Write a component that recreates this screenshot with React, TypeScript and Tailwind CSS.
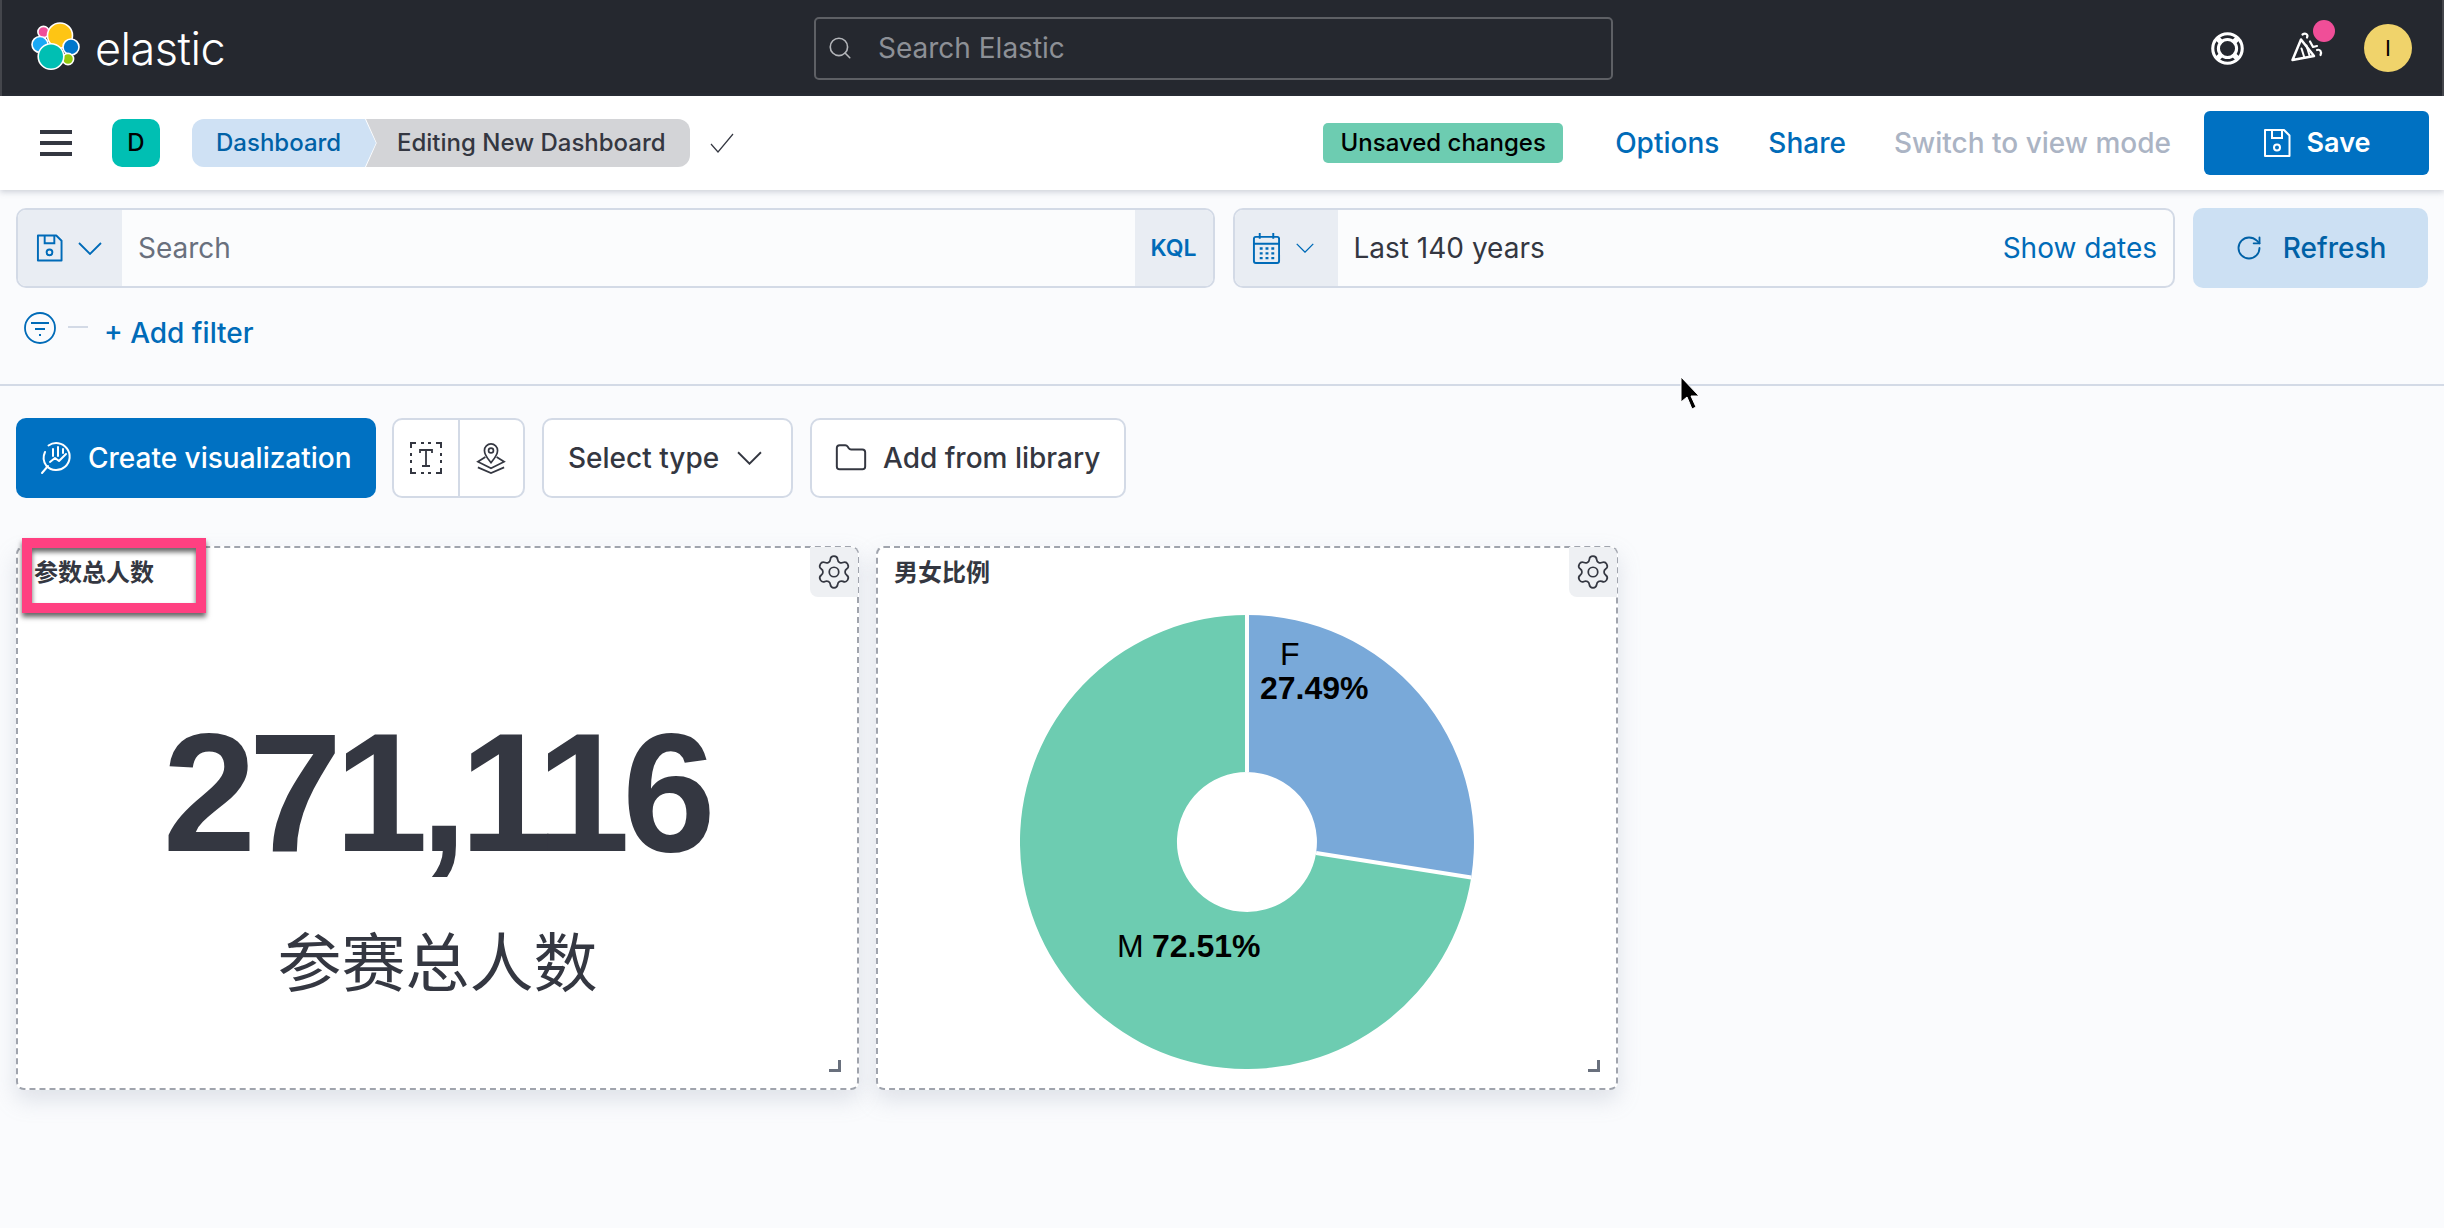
import React from 'react';
import { Search, Settings, RotateCw, Folder } from 'lucide-react';

const ElasticLogo = () => (
  <svg width="52" height="52" viewBox="0 0 52 52" className="shrink-0">
    <g stroke="#ffffff" strokeWidth="1.6">
      <circle cx="13.5" cy="10" r="5.6" fill="#f04e98" />
      <circle cx="10" cy="22.5" r="8" fill="#1ba9f5" />
      <circle cx="30" cy="13.5" r="12.5" fill="#fec514" />
      <circle cx="41" cy="25" r="8" fill="#0077cc" />
      <circle cx="38" cy="37" r="5.6" fill="#93c90e" />
      <circle cx="21" cy="34.5" r="12.8" fill="#00bfb3" />
    </g>
  </svg>
);

const DiskIcon = ({ className }: { className: string }) => (
  <svg viewBox="0 0 28 29" className={className} fill="none" stroke="currentColor" strokeWidth="2">
    <path d="M2 1.500h19l5.500 5.500v20.500H2z" strokeLinejoin="round" />
    <path d="M9 1.500v8h10v-8" />
    <circle cx="14" cy="19" r="3" />
  </svg>
);

const Chevron = ({ className }: { className: string }) => (
  <svg viewBox="0 0 24 13" className={className} fill="none" stroke="currentColor" strokeWidth="1.8">
    <path d="M1 1l11 11L23 1" />
  </svg>
);

const Tick = () => (
  <svg viewBox="0 0 24 20" className="w-[24px] h-[20px] ml-[20px] text-[#343741]" fill="none" stroke="currentColor" strokeWidth="1.2">
    <path d="M1 11l7 8L23 1" />
  </svg>
);

const CalendarIcon = () => (
  <svg viewBox="0 0 30 34" className="w-[29px] h-[33px] text-[#006bb8]" fill="none" stroke="currentColor" strokeWidth="2">
    <rect x="2" y="5" width="26" height="27" rx="2" />
    <path d="M2 12h26M8 1v6M22 1v6" />
    <path d="M8 17h3M14 17h3M20 17h3M8 22h3M14 22h3M20 22h3M8 27h3M14 27h3M20 27h3" strokeWidth="2.4" />
  </svg>
);

const FilterIcon = () => (
  <svg viewBox="0 0 32 32" className="w-[32px] h-[32px] text-[#006bb8]" fill="none" stroke="currentColor" strokeWidth="1.8">
    <circle cx="16" cy="16" r="15" />
    <path d="M7 11h18M11 17h10M15 23h2" />
  </svg>
);

const LifeRing = () => (
  <svg viewBox="0 0 32 32" className="w-[33px] h-[33px] text-white mr-[46px]" fill="none" stroke="currentColor" strokeWidth="3">
    <circle cx="16" cy="16" r="14.300" />
    <circle cx="16" cy="16" r="8.800" />
    <path d="M5.500 5.500l5 5M26.500 5.500l-5 5M5.500 26.500l5-5M26.500 26.500l-5-5" strokeWidth="5" />
  </svg>
);

const Cheer = () => (
  <svg viewBox="0 0 34 34" className="w-[34px] h-[34px] text-white" fill="none" stroke="currentColor" strokeWidth="2.500" strokeLinejoin="round" strokeLinecap="round">
    <path d="M2.500 29L11 8.500 24 25z" />
    <path d="M11.500 17.500l3 9.500M16.500 14.500l3 10" strokeWidth="2" />
    <path d="M12.500 3.500c3-2 6 0 4.500 3M20 10.500l3 5.500 4-1M27 19c3-1 5 1.500 3.500 5" strokeWidth="2.200" />
  </svg>
);

const LensIcon = () => (
  <svg viewBox="0 0 34 34" className="w-[34px] h-[34px] text-white" fill="none" stroke="currentColor" strokeWidth="2">
    <path d="M8.500 4.500a13.500 13.500 0 1 1-2 20.500M5 11a13.500 13.500 0 0 0 1.500 14" strokeLinecap="round" />
    <path d="M8 25l-6 7M10 21l5-4 4 3 7-7M13 8v7M18 6v9M23 8v4" strokeLinecap="round" strokeLinejoin="round" />
  </svg>
);

const TextBoxIcon = () => (
  <svg viewBox="0 0 32 32" className="w-[32px] h-[32px] text-[#343741]" fill="none" stroke="currentColor" strokeWidth="2">
    <path d="M1 6V1h5M11 1h3M18 1h3M26 1h5v5M31 11v3M31 18v3M31 26v5h-5M21 31h-3M14 31h-3M6 31H1v-5M1 21v-3M1 14v-3" />
    <path d="M10 11V8h12v3M16 8v16M12 24h8" strokeWidth="1.8" />
  </svg>
);

const MapLayerIcon = () => (
  <svg viewBox="0 0 32 34" className="w-[30px] h-[32px] text-[#343741]" fill="none" stroke="currentColor" strokeWidth="1.8">
    <path d="M16 22c-4-5-7-8-7-13a7 7 0 0 1 14 0c0 5-3 8-7 13z" />
    <circle cx="16" cy="9" r="2.600" />
    <path d="M10 16l-8 5 14 7 14-7-8-5M2 27l14 6 14-6" />
  </svg>
);

const Cursor = () => (
  <svg viewBox="0 0 20 34" className="absolute left-[1680px] top-[376px] w-[20px] h-[34px]">
    <path d="M1 1v25l6-5 5 12 4-2-5-11h8z" fill="#000000" stroke="#ffffff" strokeWidth="1" />
  </svg>
);

const Panel = ({ title, className, children }: { title: string; className: string; children: React.ReactNode }) => (
  <div className={`relative h-[544px] bg-white rounded-[8px] border-2 border-dashed border-[#a0a4ad] shadow-[0_10px_22px_rgba(152,162,179,0.28)] flex flex-col ${className}`}>
    <div className="h-[67px] pl-[16px] pt-[6px] text-[24px] leading-[34px] font-semibold text-[#343741] font-['Noto_Sans_CJK_SC',sans-serif]">
      {title}
    </div>
    <div className="absolute right-[-1px] top-[-1px] w-[48px] h-[50px] rounded-bl-[8px] rounded-tr-[8px] bg-[#eef0f3] flex items-center justify-center">
      <Settings className="w-[38px] h-[38px] text-[#343741]" strokeWidth={1.1} />
    </div>
    {children}
    <div className="absolute right-[16px] bottom-[16px] w-[12px] h-[12px] border-r-[3px] border-b-[3px] border-[#69707d]" />
  </div>
);

const Pie = () => (
  <svg viewBox="0 0 454 454" className="w-[454px] h-[454px] self-center font-['Liberation_Sans',sans-serif]">
    <path d="M227 0A227 227 0 0 1 451.200 262.400L296.100 237.900A70 70 0 0 0 227 157z" fill="#79a9d9" />
    <path d="M451.200 262.400A227 227 0 1 1 227 0V157A70 70 0 1 0 296.100 237.900z" fill="#6dccb1" />
    <path d="M227 0V157M451.200 262.400L296.100 237.900" stroke="#ffffff" strokeWidth="4" />
    <text x="260" y="50" fontSize="32" fill="#000000">F</text>
    <text x="240" y="84" fontSize="32" fontWeight="700" fill="#000000">27.49%</text>
    <text x="97" y="342" fontSize="32" fill="#000000">M</text>
    <text x="132" y="342" fontSize="32" fontWeight="700" fill="#000000">72.51%</text>
  </svg>
);

export default function App() {
  return (
    <div className="relative w-[2444px] h-[1228px] overflow-hidden bg-[#fafbfd] font-['Inter',sans-serif]">
      {/* top black bar */}
      <div className="h-[96px] bg-[#25282f] border-x-2 border-[#44464c] flex items-center">
        <div className="w-[812px] pl-[28px] flex items-center gap-[13px]">
          <ElasticLogo />
          <span className="text-[45px] leading-none font-light text-white tracking-[-0.5px]">elastic</span>
        </div>
        <div className="w-[799px] h-[63px] rounded-[5px] border-2 border-[#5e6065] flex items-center pl-[11px] gap-[25px] text-[#8d9096] text-[28px]">
          <Search className="w-[26px] h-[26px] text-[#b4b6ba]" strokeWidth={1.5} />
          Search Elastic
        </div>
        <div className="flex-1 flex items-center justify-end pr-[30px]">
          <LifeRing />
          <div className="relative mr-[40px]">
            <Cheer />
            <div className="absolute right-[-11px] top-[-11px] w-[22px] h-[22px] rounded-full bg-[#f04e98]" />
          </div>
          <div className="w-[48px] h-[48px] rounded-full bg-[#f0d36b] flex items-center justify-center text-[22px] text-black">I</div>
        </div>
      </div>

      {/* breadcrumb bar */}
      <div className="relative h-[94px] bg-white shadow-[0_2px_6px_rgba(100,110,130,0.3)] flex items-center pl-[40px] pr-[15px]">
        <div className="w-[32px] flex flex-col gap-[7px] mr-[40px]">
          <div className="h-[4px] bg-[#343741]" />
          <div className="h-[4px] bg-[#343741]" />
          <div className="h-[4px] bg-[#343741]" />
        </div>
        <div className="w-[48px] h-[48px] rounded-[10px] bg-[#00bfb3] flex items-center justify-center text-[24px] font-medium text-black mr-[32px]">D</div>
        <div className="flex h-[48px] text-[24px] font-medium">
          <div className="w-[184px] pl-[24px] flex items-center rounded-l-[12px] bg-[#cfe1f4] text-[#0061a6] [clip-path:polygon(0_0,94%_0,100%_50%,94%_100%,0_100%)]">Dashboard</div>
          <div className="w-[324px] ml-[-10px] pl-[31px] flex items-center rounded-r-[12px] bg-[#d3d4d7] text-[#343741] [clip-path:polygon(0_0,100%_0,100%_100%,0_100%,3.300%_50%)]">Editing New Dashboard</div>
        </div>
        <Tick />
        <div className="ml-auto w-[240px] h-[40px] flex items-center justify-center rounded-[5px] bg-[#6dccb1] text-[24px] font-medium text-black">Unsaved changes</div>
        <span className="ml-[52px] mr-[2px] text-[28px] font-medium text-[#006bb8]">Options</span>
        <span className="ml-[47px] text-[28px] font-medium text-[#006bb8]">Share</span>
        <span className="ml-[48px] text-[28px] font-medium text-[#abb4c4]">Switch to view mode</span>
        <div className="ml-[33px] w-[225px] h-[64px] rounded-[6px] bg-[#0071c2] flex items-center justify-center gap-[16px] text-[27px] font-semibold text-white">
          <DiskIcon className="w-[28px] h-[30px]" />
          Save
        </div>
      </div>

      {/* query bar */}
      <div className="h-[196px] border-b-2 border-[#d3dae6] pt-[18px]">
        <div className="flex h-[80px] px-[16px] gap-[18px]">
          <div className="w-[1199px] rounded-[10px] border-2 border-[#d3dae6] overflow-hidden flex items-stretch bg-[#fbfcfd]">
            <div className="w-[104px] bg-[#e9edf3] flex items-center pl-[18px] gap-[15px] text-[#006bb8]">
              <DiskIcon className="w-[27px] h-[28px]" />
              <Chevron className="w-[24px] h-[13px]" />
            </div>
            <div className="flex-1 pl-[16px] flex items-center text-[28px] text-[#69707d]">Search</div>
            <div className="w-[78px] bg-[#e9edf3] flex items-center justify-center text-[23px] font-semibold text-[#006bb8]">KQL</div>
          </div>
          <div className="w-[943px] rounded-[10px] border-2 border-[#d3dae6] overflow-hidden flex items-stretch bg-[#fbfcfd]">
            <div className="w-[103px] bg-[#e9edf3] flex items-center pl-[17px] gap-[15px] text-[#006bb8]">
              <CalendarIcon />
              <Chevron className="w-[18px] h-[10px]" />
            </div>
            <div className="flex-1 pl-[16px] pr-[16px] flex items-center justify-between text-[28px]">
              <span className="text-[#343741]">Last 140 years</span>
              <span className="text-[#006bb8]">Show dates</span>
            </div>
          </div>
          <div className="w-[235px] rounded-[10px] bg-[#cce0f3] flex items-center justify-center gap-[20px] text-[28px] font-medium text-[#0061a6]">
            <RotateCw className="w-[28px] h-[28px]" strokeWidth={1.6} />
            Refresh
          </div>
        </div>
        <div className="flex items-start pl-[24px] mt-[24px]">
          <FilterIcon />
          <div className="w-[20px] h-[2px] bg-[#d3dae6] ml-[12px] mt-[14px]" />
          <span className="ml-[16px] mt-[3px] text-[28px] leading-[36px] font-medium text-[#006bb8]">+ Add filter</span>
        </div>
      </div>

      {/* panel toolbar */}
      <div className="flex items-center h-[80px] mt-[32px] px-[16px]">
        <div className="w-[360px] h-[80px] rounded-[10px] bg-[#0071c2] flex items-center pl-[24px] gap-[14px] text-[28px] font-medium text-white">
          <LensIcon />
          Create visualization
        </div>
        <div className="ml-[16px] w-[133px] h-[80px] rounded-[10px] border-2 border-[#d3dae6] bg-white flex items-stretch">
          <div className="flex-1 flex items-center justify-center border-r-2 border-[#d3dae6]">
            <TextBoxIcon />
          </div>
          <div className="flex-1 flex items-center justify-center">
            <MapLayerIcon />
          </div>
        </div>
        <div className="ml-[17px] w-[251px] h-[80px] rounded-[10px] border-2 border-[#d3dae6] bg-white flex items-center pl-[24px] gap-[18px] text-[28px] font-medium text-[#343741]">
          Select type
          <Chevron className="w-[25px] h-[14px]" />
        </div>
        <div className="ml-[17px] w-[316px] h-[80px] rounded-[10px] border-2 border-[#d3dae6] bg-white flex items-center pl-[22px] gap-[15px] text-[28px] font-medium text-[#343741]">
          <Folder className="w-[34px] h-[34px]" strokeWidth={1.4} />
          Add from library
        </div>
      </div>

      {/* dashboard panels */}
      <div className="flex mt-[48px] pl-[16px] gap-[17px]">
        <Panel title="参数总人数" className="w-[843px]">
          <div className="flex flex-col items-center text-[#343741]">
            <div className="mt-[94px] pr-[4px] text-[168px] leading-[168px] font-bold font-['Liberation_Sans',sans-serif] tracking-[-7.5px]">271,116</div>
            <div className="mt-[43px] text-[64px] leading-[76px] font-['Noto_Sans_CJK_SC',sans-serif]">参赛总人数</div>
          </div>
        </Panel>
        <Panel title="男女比例" className="w-[742px]">
          <Pie />
        </Panel>
      </div>

      {/* pink annotation box from the screenshot */}
      <div className="absolute left-[22px] top-[538px] w-[184px] h-[75px] border-[10px] border-[#ff4081] shadow-[0_4px_5px_rgba(0,0,0,0.6),inset_0_4px_5px_rgba(0,0,0,0.6)]" />
      <Cursor />
    </div>
  );
}
